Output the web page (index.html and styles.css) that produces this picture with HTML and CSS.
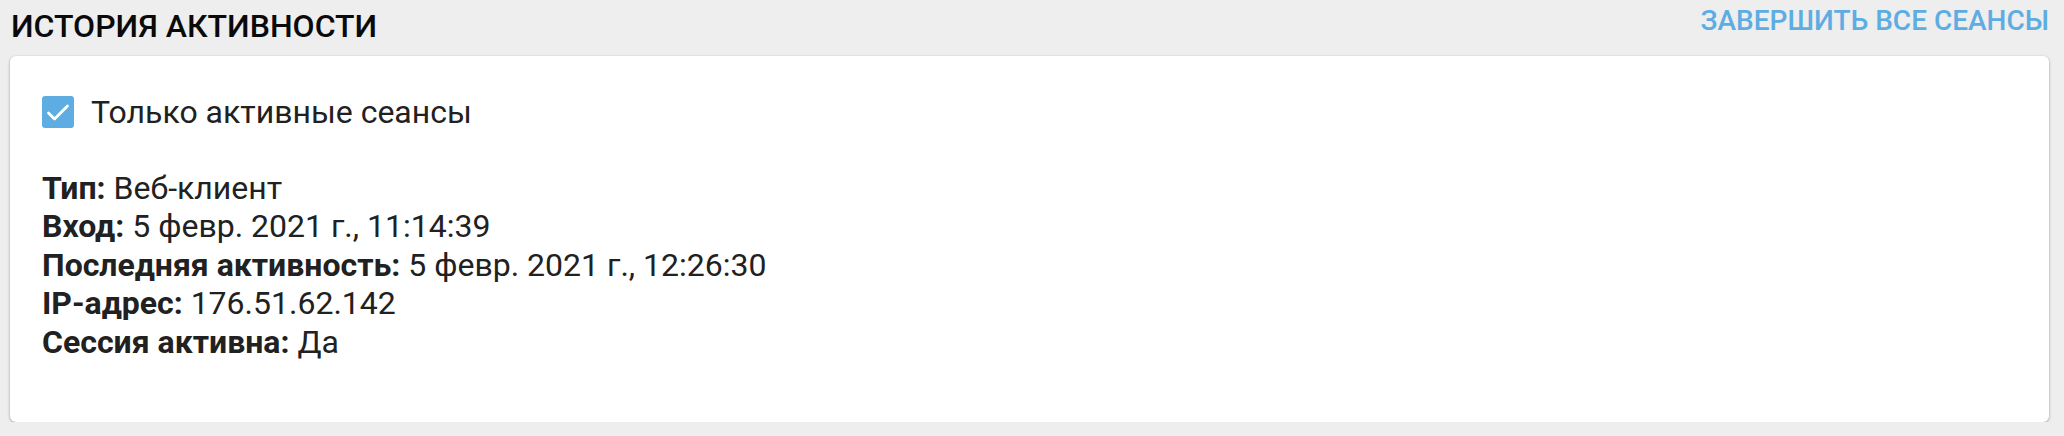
FILE: index.html
```html
<!DOCTYPE html>
<html lang="ru">
<head>
    <meta charset="UTF-8">
    <meta name="viewport" content="width=device-width, initial-scale=1.0">
    <title>История активности</title>
    <link rel="stylesheet" href="styles.css">
</head>
<body>
    <div class="header">
        <h1 class="title">История активности</h1>
        <a class="end-all" href="#">Завершить все сеансы</a>
    </div>
    <div class="card">
        <label class="only-active">
            <span class="check">
                <svg viewBox="0 0 32 32" width="32" height="32">
                    <path d="M6.5 17 L12.5 23 L25.5 10" fill="none" stroke="#ffffff" stroke-width="2.8" stroke-linecap="round" stroke-linejoin="round"/>
                </svg>
            </span>
            Только активные сеансы
        </label>
        <div class="session">
            <div><b>Тип:</b> Веб-клиент</div>
            <div><b>Вход:</b> 5 февр. 2021 г., 11:14:39</div>
            <div><b>Последняя активность:</b> 5 февр. 2021 г., 12:26:30</div>
            <div><b>IP-адрес:</b> 176.51.62.142</div>
            <div><b>Сессия активна:</b> Да</div>
        </div>
    </div>
</body>
</html>
```

FILE: styles.css
```css
body {
    margin: 0;
    padding: 0 15px 0 10px;
    background-color: #eeeeee;
    font-family: 'Roboto', 'Noto Sans', sans-serif;
    color: #212121;
}

.header {
    display: flex;
    justify-content: space-between;
    align-items: flex-start;
}

.title {
    margin: 8px 0 0 1px;
    font-size: 32px;
    font-weight: 500;
    line-height: 37px;
    text-transform: uppercase;
    color: #0a0a0a;
}

.end-all {
    margin-top: 4px;
    font-size: 28px;
    font-weight: 500;
    line-height: 33px;
    text-transform: uppercase;
    text-decoration: none;
    color: #5dade2;
}

.card {
    margin-top: 11px;
    padding: 40px 32px 61px;
    background-color: #ffffff;
    border-radius: 6px;
    box-shadow: 0 1px 3px rgba(0, 0, 0, 0.35);
}

.only-active {
    display: flex;
    align-items: center;
    gap: 17px;
    font-size: 32px;
    line-height: 32px;
    color: #212121;
}

.check {
    display: flex;
    width: 32px;
    height: 32px;
    border-radius: 3px;
    background-color: #5dade2;
}

.session {
    margin-top: 41px;
    font-size: 32px;
    line-height: 38.4px;
}

.session b {
    font-weight: 700;
}
```
